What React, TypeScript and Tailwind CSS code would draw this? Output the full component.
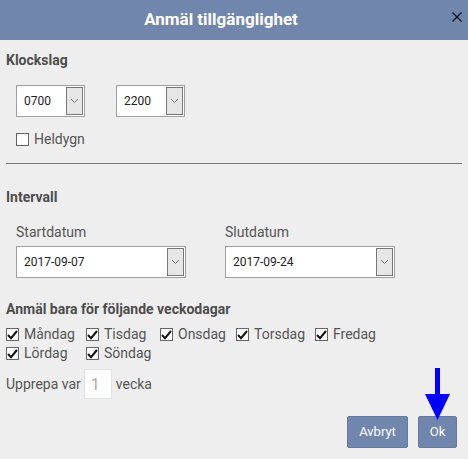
import React from 'react'

function Chevron() {
  return (
    <svg width="9" height="6" viewBox="0 0 9 6" fill="none" stroke="#777" strokeWidth="1">
      <path d="M1 1l3.5 3.5L8 1" />
    </svg>
  )
}

function FakeSelect({ value, width }: { value: string; width: string }) {
  return (
    <div className={`${width} h-8 flex items-center justify-between bg-white border border-[#a0a0a0] pl-[7px] pr-px text-[12px] text-[#222]`}>
      <span>{value}</span>
      <span className="w-[17px] h-[28px] flex items-center justify-center bg-[#e6e6e6] border border-[#777]">
        <Chevron />
      </span>
    </div>
  )
}

function Day({ label, width }: { label: string; width: string }) {
  return (
    <label className={`${width} h-[19px] flex items-center gap-[5px]`}>
      <span className="w-[13px] h-[13px] flex items-center justify-center bg-white border border-[#666]">
        <svg width="11" height="10" viewBox="0 0 11 10" fill="none" stroke="#111" strokeWidth="2">
          <path d="M1 5l3 3.2L10 1" />
        </svg>
      </span>
      <span>{label}</span>
    </label>
  )
}

export default function App() {
  return (
    <div className="relative w-[468px] h-[459px] overflow-hidden bg-[#eeeeee] font-['Roboto',sans-serif] text-[14px] text-[#555]">
      <header className="relative h-10 flex items-center justify-center pr-[26px] bg-[#7186ad]">
        <h1 className="text-[17px] font-bold text-white">Anmäl tillgänglighet</h1>
        <svg className="absolute left-[452px] top-[12px]" width="10" height="10" viewBox="0 0 10 10" stroke="#0d1526" strokeWidth="1.4">
          <path d="M0.5 0.5l9 9M9.5 0.5l-9 9" />
        </svg>
      </header>

      <div className="px-[6px]">
        <h2 className="mt-[13px] text-[14px] leading-[15px] font-bold text-[#4d4d4d]">Klockslag</h2>
        <div className="mt-[17px] ml-[10px] flex gap-[31px]">
          <FakeSelect value="0700" width="w-[69px]" />
          <FakeSelect value="2200" width="w-[69px]" />
        </div>
        <label className="mt-[14px] ml-[10px] flex items-center gap-[5px] h-[17px]">
          <span className="w-[13px] h-[13px] bg-white border border-[#666]" />
          <span>Heldygn</span>
        </label>

        <hr className="mt-[15px] border-0 border-t border-[#777] w-[456px]" />

        <h2 className="mt-[26px] text-[14px] leading-[15px] font-bold text-[#4d4d4d]">Intervall</h2>
        <div className="mt-[19px] ml-[10px] flex gap-[39px]">
          <div className="w-[170px]">
            <div className="leading-[17px] mb-[5px]">Startdatum</div>
            <FakeSelect value="2017-09-07" width="w-[170px]" />
          </div>
          <div className="w-[170px]">
            <div className="leading-[17px] mb-[5px]">Slutdatum</div>
            <FakeSelect value="2017-09-24" width="w-[170px]" />
          </div>
        </div>

        <h2 className="mt-[24px] text-[14px] leading-[15px] font-bold text-[#4d4d4d]">Anmäl bara för följande veckodagar</h2>
        <div className="mt-[8px] flex">
          <Day label="Måndag" width="w-[80px]" />
          <Day label="Tisdag" width="w-[74px]" />
          <Day label="Onsdag" width="w-[76px]" />
          <Day label="Torsdag" width="w-[79px]" />
          <Day label="Fredag" width="w-[75px]" />
        </div>
        <div className="flex">
          <Day label="Lördag" width="w-[80px]" />
          <Day label="Söndag" width="w-[74px]" />
        </div>
        <div className="mt-[6px] flex items-center">
          <span>Upprepa var</span>
          <span className="ml-[3px] mr-[4px] w-[28px] h-[30px] pl-[6px] pt-[2px] flex items-center bg-white border border-[#e2e2e2] text-[16px] text-[#aaa]">1</span>
          <span>vecka</span>
        </div>
      </div>

      <div className="mt-[17px] pr-[11px] flex justify-end gap-[10px]">
        <button className="w-[61px] h-8 rounded-[2px] bg-[#7186ad] border border-[#66799e] text-[13px] text-white">Avbryt</button>
        <button className="w-[39px] h-8 rounded-[2px] bg-[#7186ad] border border-[#66799e] text-[13px] text-white">Ok</button>
      </div>

      {/* annotation arrow over the Ok button */}
      <svg className="absolute left-[425px] top-[368px]" width="25" height="52" viewBox="0 0 25 52" fill="#0000ff">
        <rect x="10" y="0" width="5" height="27" />
        <path d="M0 26h25L12.5 52z" />
      </svg>
    </div>
  )
}
